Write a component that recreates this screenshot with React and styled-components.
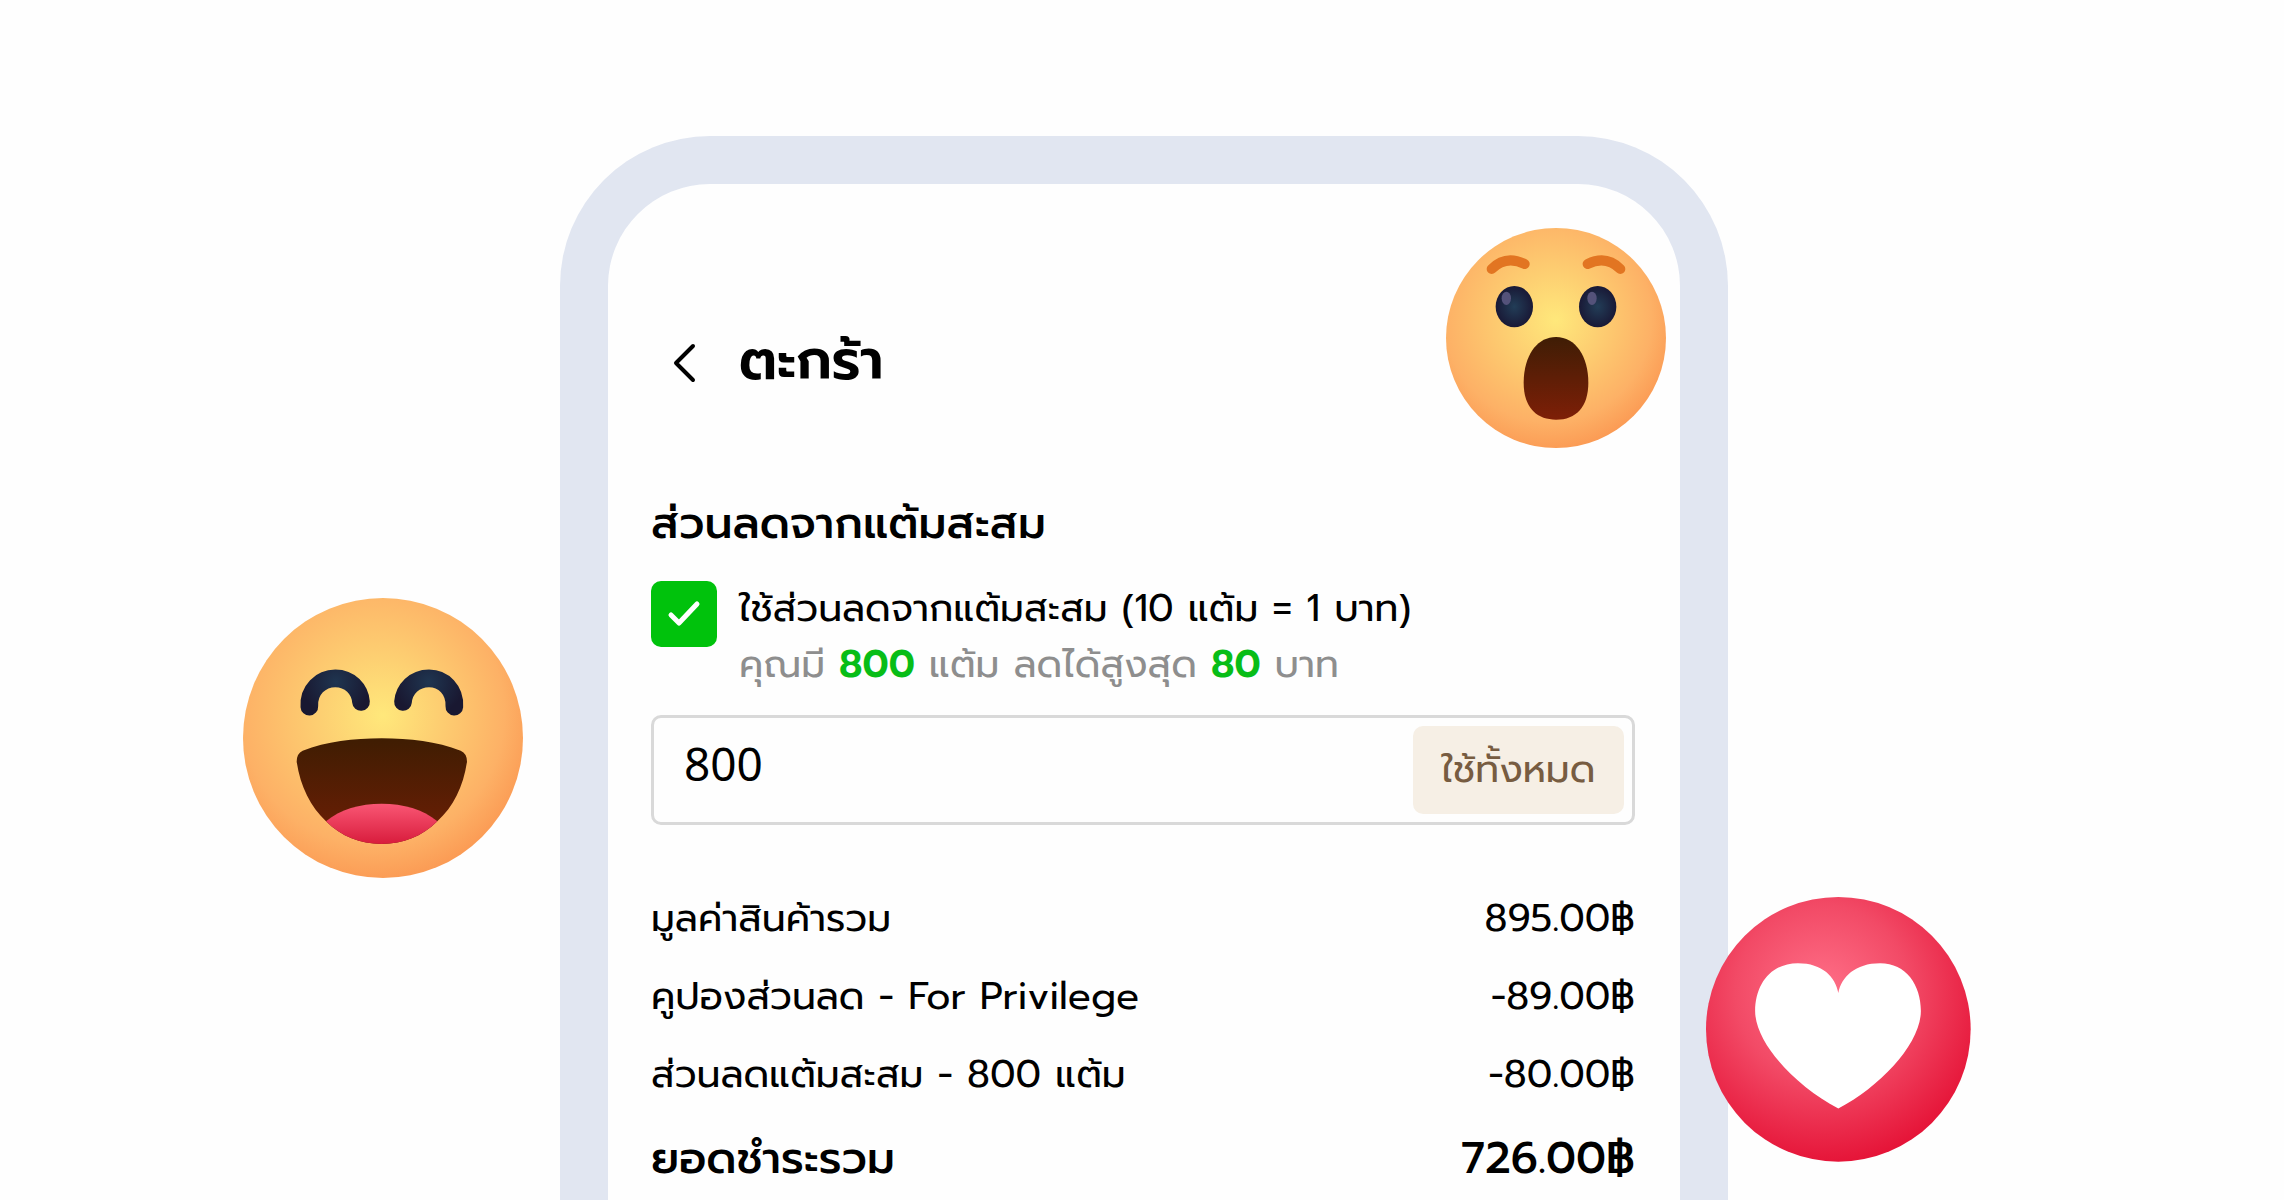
import { useState } from "react";
import styled, { createGlobalStyle } from "styled-components";

const GlobalStyle = createGlobalStyle`
  * {
    box-sizing: border-box;
  }
  body {
    margin: 0;
    background: #fefefe;
    color: #000;
    font-family: Prompt, "Noto Sans", "Noto Sans Thai", sans-serif;
  }
  button, input {
    font: inherit;
    color: inherit;
  }
`;

const Stage = styled.main`
  display: flex;
  justify-content: center;
  height: 100vh;
  padding: 136px 0 0 4px;
  overflow: hidden;
`;

const Phone = styled.div`
  position: relative;
  width: 100%;
  max-width: 1168px;
  border: 48px solid #e1e6f1;
  border-bottom: 0;
  border-radius: 150px 150px 0 0;
  background: #fefefe;
`;

const Screen = styled.div`
  padding: 145px 45px 0 43px;
`;

const Header = styled.header`
  display: flex;
  align-items: center;
  gap: 22px;
  height: 66px;
`;

const BackButton = styled.button`
  display: flex;
  align-items: center;
  justify-content: center;
  width: 66px;
  height: 66px;
  padding: 0;
  border: 0;
  background: transparent;
`;

const Title = styled.h1`
  margin: 0;
  padding-bottom: 2px;
  font-size: 55px;
  line-height: 64px;
  font-weight: 600;
`;

const SectionTitle = styled.h2`
  margin: 97px 0 25px;
  font-size: 44px;
  line-height: 64px;
  font-weight: 500;
`;

const OptionRow = styled.div`
  display: flex;
  gap: 22px;
`;

const CheckWrap = styled.span`
  position: relative;
  flex: none;
  width: 66px;
  height: 66px;

  svg {
    position: absolute;
    inset: 0;
    pointer-events: none;
  }
`;

const Checkbox = styled.input`
  appearance: none;
  display: block;
  width: 66px;
  height: 66px;
  margin: 0;
  border-radius: 10px;
  border: 2px solid #d9d9d9;

  &:checked {
    border: 0;
    background: #00c20c;
  }
`;

const OptionText = styled.div`
  font-size: 38px;
  line-height: 56px;
`;

const OptionLabel = styled.label`
  display: block;
`;

const Hint = styled.p`
  margin: 0;
  color: #8e8e8e;

  strong {
    color: #08bd17;
    font-weight: 600;
  }
`;

const PointField = styled.div`
  display: flex;
  align-items: center;
  height: 110px;
  margin-top: 22px;
  padding: 0 8px 0 0;
  border: 3px solid #d9d9d9;
  border-radius: 10px;
`;

const PointInput = styled.input`
  flex: 1;
  min-width: 0;
  height: 100%;
  padding: 0 30px 14px;
  border: 0;
  outline: 0;
  background: transparent;
  font-family: "Noto Sans", sans-serif;
  font-size: 46px;
`;

const UseAllButton = styled.button`
  width: 211px;
  height: 88px;
  padding: 0 0 2px;
  border: 0;
  border-radius: 10px;
  background: #f6efe5;
  color: #775c41;
  font-size: 38px;
`;

const Summary = styled.dl`
  margin: 55px 0 0;
`;

const SummaryRow = styled.div`
  display: flex;
  justify-content: space-between;
  font-size: ${({ $total }) => ($total ? "44px" : "38px")};
  font-weight: ${({ $total }) => ($total ? 500 : 400)};
  line-height: ${({ $total }) => ($total ? "90px" : "78px")};
  white-space: nowrap;

  dd {
    margin: 0;
  }
`;

const Reaction = styled.svg`
  position: absolute;
  width: ${({ $size }) => $size}px;
  height: ${({ $size }) => $size}px;
`;

const LaughReaction = styled(Reaction)`
  top: 414px;
  left: -365px;
`;

const WowReaction = styled(Reaction)`
  top: 44px;
  right: 14px;
`;

const HeartReaction = styled(Reaction)`
  top: 713px;
  right: -291px;
`;

const summaryRows = [
  { label: "มูลค่าสินค้ารวม", value: "895.00฿" },
  { label: "คูปองส่วนลด - For Privilege", value: "-89.00฿" },
  { label: "ส่วนลดแต้มสะสม - 800 แต้ม", value: "-80.00฿" },
  { label: "ยอดชำระรวม", value: "726.00฿", total: true },
];

const FaceGradient = ({ id }) => (
  <radialGradient id={id} cx="0.45" cy="0.41" fx="0.5" fy="0.42" r="0.67">
    <stop offset="0" stopColor="#ffe87b" />
    <stop offset="0.3" stopColor="#fdd072" />
    <stop offset="0.7" stopColor="#fdb166" />
    <stop offset="1" stopColor="#fa8f4b" />
  </radialGradient>
);

const EyeGradient = ({ id }) => (
  <radialGradient id={id}>
    <stop offset="0" stopColor="#223d57" />
    <stop offset="1" stopColor="#191936" />
  </radialGradient>
);

const Laugh = () => (
  <LaughReaction $size={280} viewBox="39 54 840 840" aria-hidden="true">
    <defs>
      <FaceGradient id="laughFace" />
      <radialGradient id="laughEyeLeft" gradientUnits="userSpaceOnUse" cx="318" cy="306" r="104">
        <stop offset="0" stopColor="#1f3550" />
        <stop offset="1" stopColor="#191831" />
      </radialGradient>
      <radialGradient id="laughEyeRight" gradientUnits="userSpaceOnUse" cx="596" cy="306" r="104">
        <stop offset="0" stopColor="#1f3550" />
        <stop offset="1" stopColor="#191831" />
      </radialGradient>
      <linearGradient id="laughMouth" x1="0" y1="0" x2="0" y2="1">
        <stop offset="0" stopColor="#3f1d02" />
        <stop offset="1" stopColor="#6f1e05" />
      </linearGradient>
      <linearGradient id="tongue" x1="0" y1="0" x2="0" y2="1">
        <stop offset="0" stopColor="#f95674" />
        <stop offset="1" stopColor="#d81c3c" />
      </linearGradient>
      <clipPath id="mouthClip">
        <path d="M218 512C290 485 370 475 455 475S620 485 692 512Q711 520 711 545C700 620 670 680 622 724C575 770 520 792 455 792S335 770 288 724C242 680 211 620 200 545Q200 520 218 512Z" />
      </clipPath>
    </defs>
    <circle cx="459" cy="474" r="420" fill="url(#laughFace)" />
    <g fill="none" strokeWidth="53" strokeLinecap="round">
      <path d="M238 380C235 330 272 295 316 295C360 295 390 328 393 366" stroke="url(#laughEyeLeft)" />
      <path d="M673 380C676 330 640 295 597 295C553 295 522 328 519 366" stroke="url(#laughEyeRight)" />
    </g>
    <path
      d="M218 512C290 485 370 475 455 475S620 485 692 512Q711 520 711 545C700 620 670 680 622 724C575 770 520 792 455 792S335 770 288 724C242 680 211 620 200 545Q200 520 218 512Z"
      fill="url(#laughMouth)"
    />
    <path
      d="M288 724C330 688 390 671 455 671S580 688 622 724L622 792H288Z"
      fill="url(#tongue)"
      clipPath="url(#mouthClip)"
    />
  </LaughReaction>
);

const Wow = () => (
  <WowReaction $size={220} viewBox="49 54 660 660" aria-hidden="true">
    <defs>
      <FaceGradient id="wowFace" />
      <EyeGradient id="wowEye" />
      <linearGradient id="wowMouth" x1="0" y1="0" x2="0" y2="1">
        <stop offset="0" stopColor="#3f1d05" />
        <stop offset="1" stopColor="#7e1f07" />
      </linearGradient>
    </defs>
    <circle cx="379" cy="384" r="330" fill="url(#wowFace)" />
    <g fill="none" stroke="#e27522" strokeWidth="30" strokeLinecap="round">
      <path d="M186 177C214 149 246 143 285 162" />
      <path d="M572 177C544 149 513 143 474 162" />
    </g>
    <ellipse cx="254" cy="290" rx="56" ry="62" fill="url(#wowEye)" />
    <ellipse cx="504" cy="290" rx="56" ry="62" fill="url(#wowEye)" />
    <ellipse cx="230" cy="265" rx="14" ry="20" fill="#54527a" />
    <ellipse cx="487" cy="265" rx="14" ry="20" fill="#54527a" />
    <path
      d="M379 381C438 381 476 440 476 518C476 590 440 629 379 629S282 590 282 518C282 440 320 381 379 381Z"
      fill="url(#wowMouth)"
    />
  </WowReaction>
);

const Heart = () => (
  <HeartReaction $size={265} viewBox="49 51 793 793" aria-hidden="true">
    <defs>
      <radialGradient id="heartBg" cx="0.44" cy="0.36" r="0.66">
        <stop offset="0" stopColor="#ff7088" />
        <stop offset="0.5" stopColor="#f24a66" />
        <stop offset="1" stopColor="#e51236" />
      </radialGradient>
    </defs>
    <circle cx="445" cy="447" r="396" fill="url(#heartBg)" />
    <path
      d="M445 338C436 290 398 249 324 249C242 249 196 314 196 392C196 488 316 616 445 684C574 616 692 488 692 392C692 314 648 249 570 249C496 249 454 290 445 338Z"
      fill="#fff"
    />
  </HeartReaction>
);

const App = () => {
  const [usePoints, setUsePoints] = useState(true);
  const [points, setPoints] = useState("800");

  return (
    <>
      <GlobalStyle />
      <Stage>
        <Phone>
          <Screen>
            <Header>
              <BackButton type="button" aria-label="ย้อนกลับ">
                <svg width="66" height="66" viewBox="0 0 66 66" fill="none">
                  <path
                    d="M42 17L25 34L42 51"
                    stroke="#000"
                    strokeWidth="4"
                    strokeLinecap="round"
                    strokeLinejoin="round"
                  />
                </svg>
              </BackButton>
              <Title>ตะกร้า</Title>
            </Header>

            <SectionTitle>ส่วนลดจากแต้มสะสม</SectionTitle>
            <OptionRow>
              <CheckWrap>
                <Checkbox
                  id="use-points"
                  type="checkbox"
                  checked={usePoints}
                  onChange={(e) => setUsePoints(e.target.checked)}
                />
                <svg width="66" height="66" viewBox="0 0 66 66" fill="none">
                  <path
                    d="M20 34L28 42L46 23"
                    stroke="#fff"
                    strokeWidth="5"
                    strokeLinecap="round"
                    strokeLinejoin="round"
                  />
                </svg>
              </CheckWrap>
              <OptionText>
                <OptionLabel htmlFor="use-points">
                  ใช้ส่วนลดจากแต้มสะสม (10 แต้ม = 1 บาท)
                </OptionLabel>
                <Hint>
                  คุณมี <strong>800</strong> แต้ม ลดได้สูงสุด <strong>80</strong> บาท
                </Hint>
              </OptionText>
            </OptionRow>

            <PointField>
              <PointInput
                type="text"
                inputMode="numeric"
                aria-label="แต้ม"
                value={points}
                onChange={(e) => setPoints(e.target.value)}
              />
              <UseAllButton type="button" onClick={() => setPoints("800")}>
                ใช้ทั้งหมด
              </UseAllButton>
            </PointField>

            <Summary>
              {summaryRows.map((row) => (
                <SummaryRow key={row.label} $total={row.total}>
                  <dt>{row.label}</dt>
                  <dd>{row.value}</dd>
                </SummaryRow>
              ))}
            </Summary>
          </Screen>

          <Laugh />
          <Wow />
          <Heart />
        </Phone>
      </Stage>
    </>
  );
};

export default App;
